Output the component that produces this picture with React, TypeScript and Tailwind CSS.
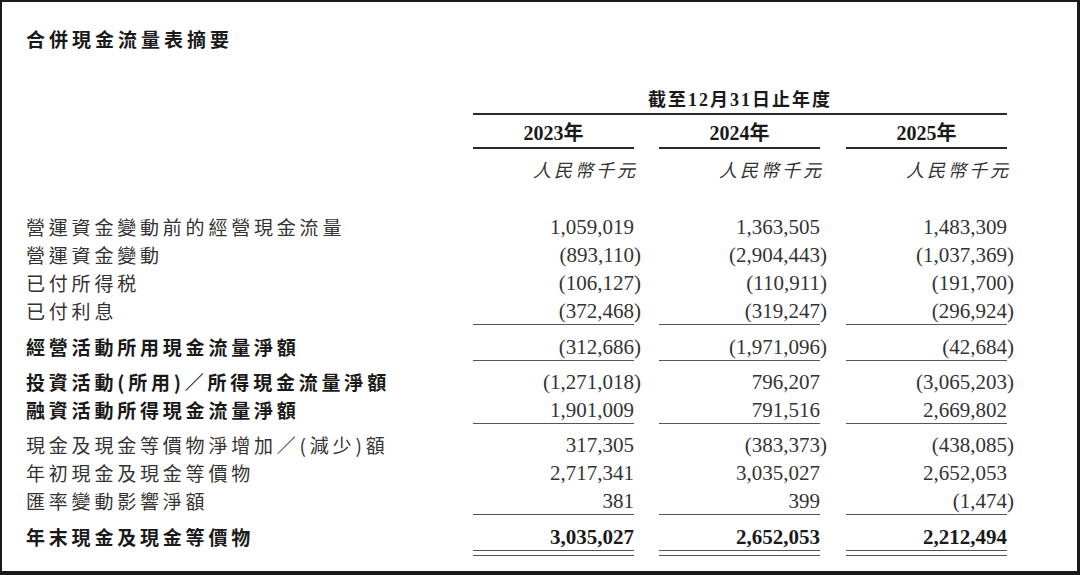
import React from 'react';

type Row = {
  label: string;
  vals: string[];
  bold?: boolean;
  numBold?: boolean;
  line?: 'single' | 'double';
  gap?: string;
};

const rows: Row[] = [
  { label: '營運資金變動前的經營現金流量', vals: ['1,059,019', '1,363,505', '1,483,309'], gap: 'mt-[32px]' },
  { label: '營運資金變動', vals: ['(893,110)', '(2,904,443)', '(1,037,369)'] },
  { label: '已付所得税', vals: ['(106,127)', '(110,911)', '(191,700)'] },
  { label: '已付利息', vals: ['(372,468)', '(319,247)', '(296,924)'], line: 'single' },
  { label: '經營活動所用現金流量淨額', vals: ['(312,686)', '(1,971,096)', '(42,684)'], bold: true, line: 'single', gap: 'mt-[8px]' },
  { label: '投資活動(所用)／所得現金流量淨額', vals: ['(1,271,018)', '796,207', '(3,065,203)'], bold: true, gap: 'mt-[7px]' },
  { label: '融資活動所得現金流量淨額', vals: ['1,901,009', '791,516', '2,669,802'], bold: true, line: 'single' },
  { label: '現金及現金等價物淨增加／(減少)額', vals: ['317,305', '(383,373)', '(438,085)'], gap: 'mt-[7px]' },
  { label: '年初現金及現金等價物', vals: ['2,717,341', '3,035,027', '2,652,053'] },
  { label: '匯率變動影響淨額', vals: ['381', '399', '(1,474)'], line: 'single' },
  { label: '年末現金及現金等價物', vals: ['3,035,027', '2,652,053', '2,212,494'], bold: true, numBold: true, line: 'double', gap: 'mt-[8px]' },
];

const colGap = ['ml-[25px]', 'ml-[25px]', 'ml-[26px]'];

const Num = ({ v }: { v: string }) => {
  // accounting style: closing bracket hangs past the column edge
  if (v.startsWith('(')) {
    return (
      <>
        {v.slice(0, -1)}
        <span className="inline-block w-0">)</span>
      </>
    );
  }
  return <>{v}</>;
};

const App = () => {
  return (
    <div className="w-[1080px] h-[575px] bg-white border-2 border-r-[3px] border-b-[4px] border-[#1a1a1a] pl-[24px] pr-[70px] pt-[27px] overflow-hidden">
      {/* title */}
      <div className="h-[20px] leading-[20px] text-[19px] tracking-[4px] font-bold text-[#1a1a1a] font-['Noto_Sans_CJK_TC',sans-serif]">
        合併現金流量表摘要
      </div>

      {/* period header */}
      <div className="mt-[38px] flex">
        <div className="flex-1" />
        <div className="w-[534px] ml-[25px] h-[28px] border-b-2 border-[#2a2a2a] text-center leading-[26px] text-[18px] font-bold text-[#1a1a1a] tracking-[2px] font-['Liberation_Serif','Noto_Sans_CJK_TC',serif]">
          截至12月31日止年度
        </div>
      </div>

      {/* years */}
      <div className="flex">
        <div className="flex-1" />
        {['2023年', '2024年', '2025年'].map((y, i) => (
          <div
            key={y}
            className={`w-[161px] ${colGap[i]} h-[34px] pt-[6px] border-b-2 border-[#2a2a2a] text-center leading-[24px] text-[20px] font-bold text-[#1a1a1a] font-['Liberation_Serif','Noto_Sans_CJK_TC',serif]`}
          >
            {y}
          </div>
        ))}
      </div>

      {/* currency */}
      <div className="flex">
        <div className="flex-1" />
        {[0, 1, 2].map((i) => (
          <div
            key={i}
            className={`w-[161px] ${colGap[i]} pt-[8px] text-right leading-[24px] text-[18px] italic text-[#333] tracking-[3px] font-['Noto_Sans_CJK_TC',sans-serif]`}
          >
            <span className="-mr-[4px]">人民幣千元</span>
          </div>
        ))}
      </div>

      {/* rows */}
      {rows.map((r) => (
        <React.Fragment key={r.label}>
          <div className={`flex h-[28px] ${r.gap ?? ''}`}>
            <div
              className={`flex-1 leading-[28px] text-[19px] tracking-[3.8px] whitespace-nowrap font-['Noto_Sans_CJK_TC',sans-serif] ${
                r.bold ? 'font-bold text-[#1a1a1a]' : 'text-[#333]'
              }`}
            >
              {r.label}
            </div>
            {r.vals.map((v, i) => (
              <div
                key={i}
                className={`w-[161px] ${colGap[i]} text-right leading-[28px] text-[21px] font-['Liberation_Serif',serif] ${
                  r.numBold ? 'font-bold text-[#1a1a1a]' : 'text-[#333]'
                } ${r.line ? 'border-b border-[#555]' : ''}`}
              >
                <Num v={v} />
              </div>
            ))}
          </div>
          {r.line === 'double' && (
            <div className="flex mt-[4px]">
              <div className="flex-1" />
              {[0, 1, 2].map((i) => (
                <div key={i} className={`w-[161px] ${colGap[i]} h-px bg-[#555]`} />
              ))}
            </div>
          )}
        </React.Fragment>
      ))}
    </div>
  );
};

export default App;
